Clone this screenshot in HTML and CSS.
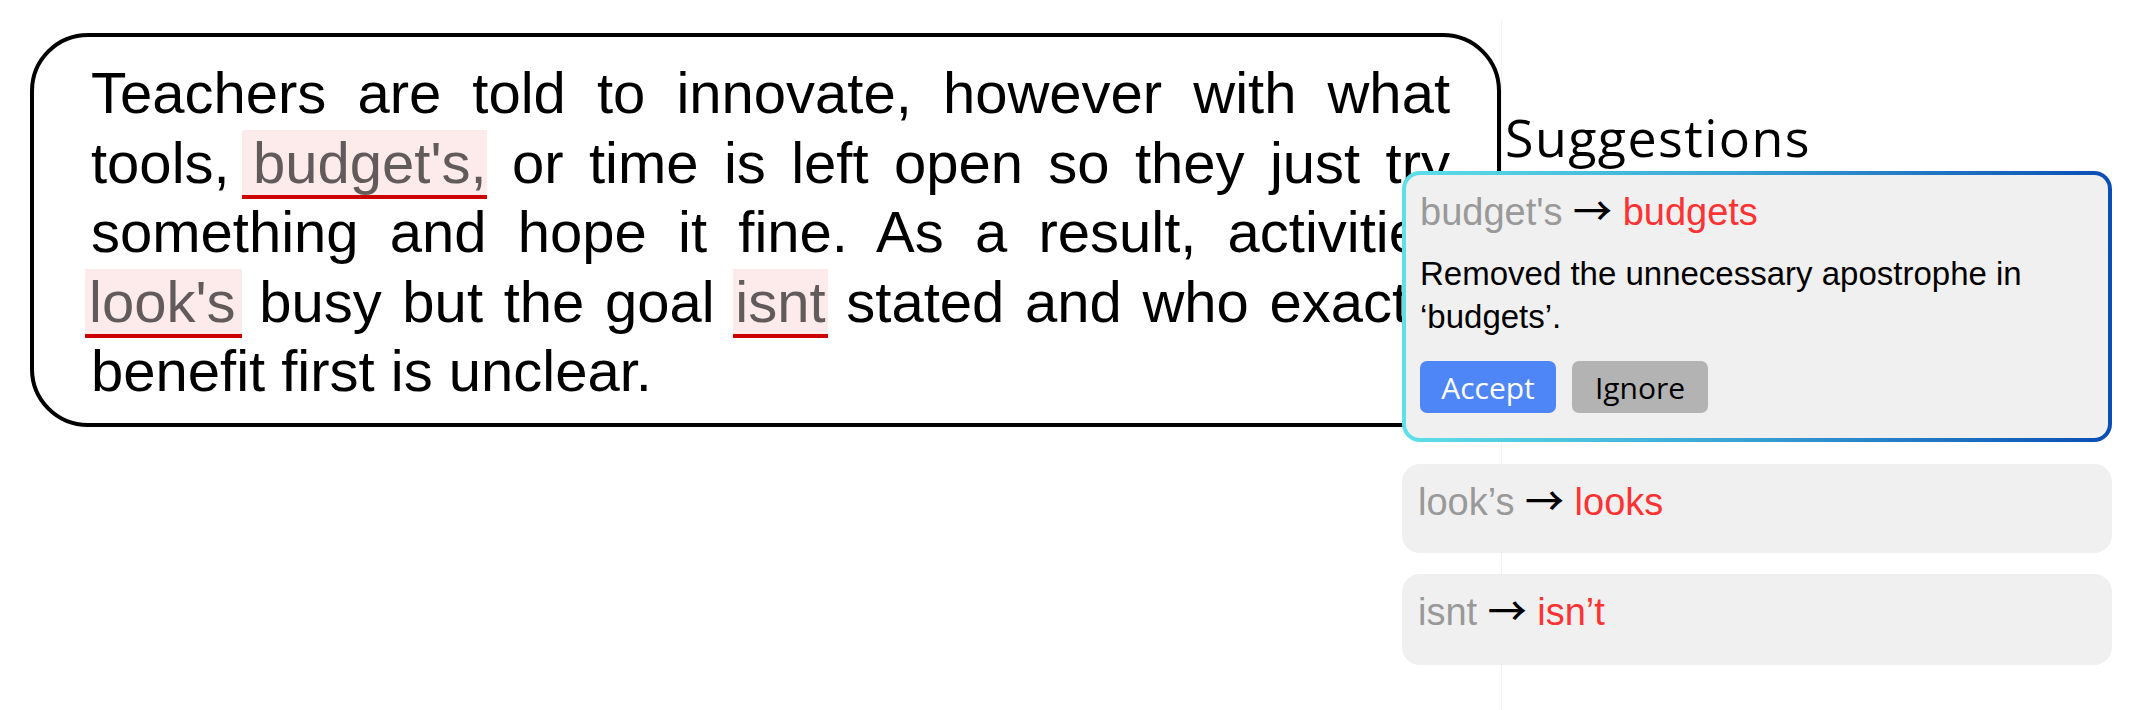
FILE: index.html
```html
<!DOCTYPE html>
<html lang="en">
<head>
<meta charset="utf-8">
<title>Suggestions</title>
<link rel="stylesheet" href="styles.css">
</head>
<body>
<div class="app">
  <main class="editor-col">
    <div class="editor">
      <p class="editor-text">Teachers are told to innovate, however with what tools, <span class="err err--lead">budget's,</span> or time is left open so they just try something and hope it fine. As a result, activities <span class="err err--tail">look's</span> busy but the goal <span class="err">isnt</span> stated and who exactly benefit first is unclear.</p>
    </div>
  </main>
  <aside class="sidebar">
    <h2 class="sidebar-title">Suggestions</h2>
    <div class="card card--active">
      <div class="card-title"><span class="old">budget's</span> <span class="arrow">→</span> <span class="new">budgets</span></div>
      <p class="card-desc">Removed the unnecessary apostrophe in ‘budgets’.</p>
      <div class="card-actions">
        <button class="btn btn--accept">Accept</button>
        <button class="btn btn--ignore">Ignore</button>
      </div>
    </div>
    <div class="card">
      <div class="card-title"><span class="old">look’s</span> <span class="arrow">→</span> <span class="new">looks</span></div>
    </div>
    <div class="card card--last">
      <div class="card-title"><span class="old">isnt</span> <span class="arrow">→</span> <span class="new">isn’t</span></div>
    </div>
  </aside>
</div>
</body>
</html>
```
FILE: styles.css
```css
* { box-sizing: border-box; }

html, body {
  margin: 0;
  padding: 0;
  background: #ffffff;
}

body {
  font-family: "Liberation Sans", Arial, sans-serif;
  color: #000;
  width: 2145px;
  height: 710px;
  overflow: hidden;
}

.app {
  display: flex;
  align-items: flex-start;
  height: 710px;
}

.editor-col {
  flex: 0 0 1501px;
  padding: 33px 0 0 30px;
}

.editor {
  width: 1471px;
  border: 4px solid #000;
  border-radius: 58px;
  padding: 21px 47px 17px 57px;
}

.editor-text {
  margin: 0;
  font-size: 58px;
  line-height: 69.6px;
  text-align: justify;
}

.err {
  background: #fdeaea;
  color: #625b5b;
  border-bottom: 4px solid #cc0000;
  padding: 0 2px;
  margin: 0 -2px;
}

.err--lead { padding-left: 11px; margin-left: -13px; padding-right: 0; margin-right: 0; }
.err--tail { padding-left: 4px; margin-left: -6px; padding-right: 7px; margin-right: -4px; }

.sidebar {
  flex: 1 1 auto;
  align-self: stretch;
  margin-top: 20px;
  border-left: 1px solid #f2f2f2;
  padding-left: 3px;
}

.sidebar-title {
  margin: 83px 0 0;
  font-family: "Open Sans", sans-serif;
  font-weight: 400;
  font-size: 52px;
  line-height: 68px;
  letter-spacing: 1.4px;
  color: #000;
}

.card {
  position: relative;
  width: 710px;
  margin-left: -103px;
  margin-bottom: 21px;
  background: #f0f0f0;
  border-radius: 18px;
  padding: 16px 16px 29px;
}

.card--active {
  border: 4px solid transparent;
  border-radius: 18px;
  padding: 15px 14px 25px;
  background:
    linear-gradient(#f0f0f0, #f0f0f0) padding-box,
    linear-gradient(90deg, #5fe0e8 0%, #3aa6d6 45%, #0a4db4 100%) border-box;
  margin-bottom: 22px;
}

.card--last { padding-bottom: 31px; }

.card-title {
  font-size: 38px;
  height: 44px;
  line-height: 44px;
  white-space: nowrap;
}

.card--active .card-title { margin-bottom: 18px; }

.old { color: #999999; }
.arrow {
  color: #000;
  font-family: "Noto Sans CJK JP", "DejaVu Sans", sans-serif;
  font-size: 39px;
  font-weight: 500;
  line-height: 0;
  position: relative;
  top: 0;
}
.new { color: #ff3333; }

.card-desc {
  margin: 0 0 23px;
  font-size: 33px;
  line-height: 43px;
  color: #000;
}

.card-actions {
  display: flex;
  gap: 16px;
}

.btn {
  width: 136px;
  height: 52px;
  border: none;
  border-radius: 7px;
  font-family: "Open Sans", sans-serif;
  font-size: 30px;
  padding: 0;
  display: flex;
  align-items: center;
  justify-content: center;
}

.btn--accept { background: #4f86f7; color: #fff; }
.btn--ignore { background: #b3b3b3; color: #000; }
```
